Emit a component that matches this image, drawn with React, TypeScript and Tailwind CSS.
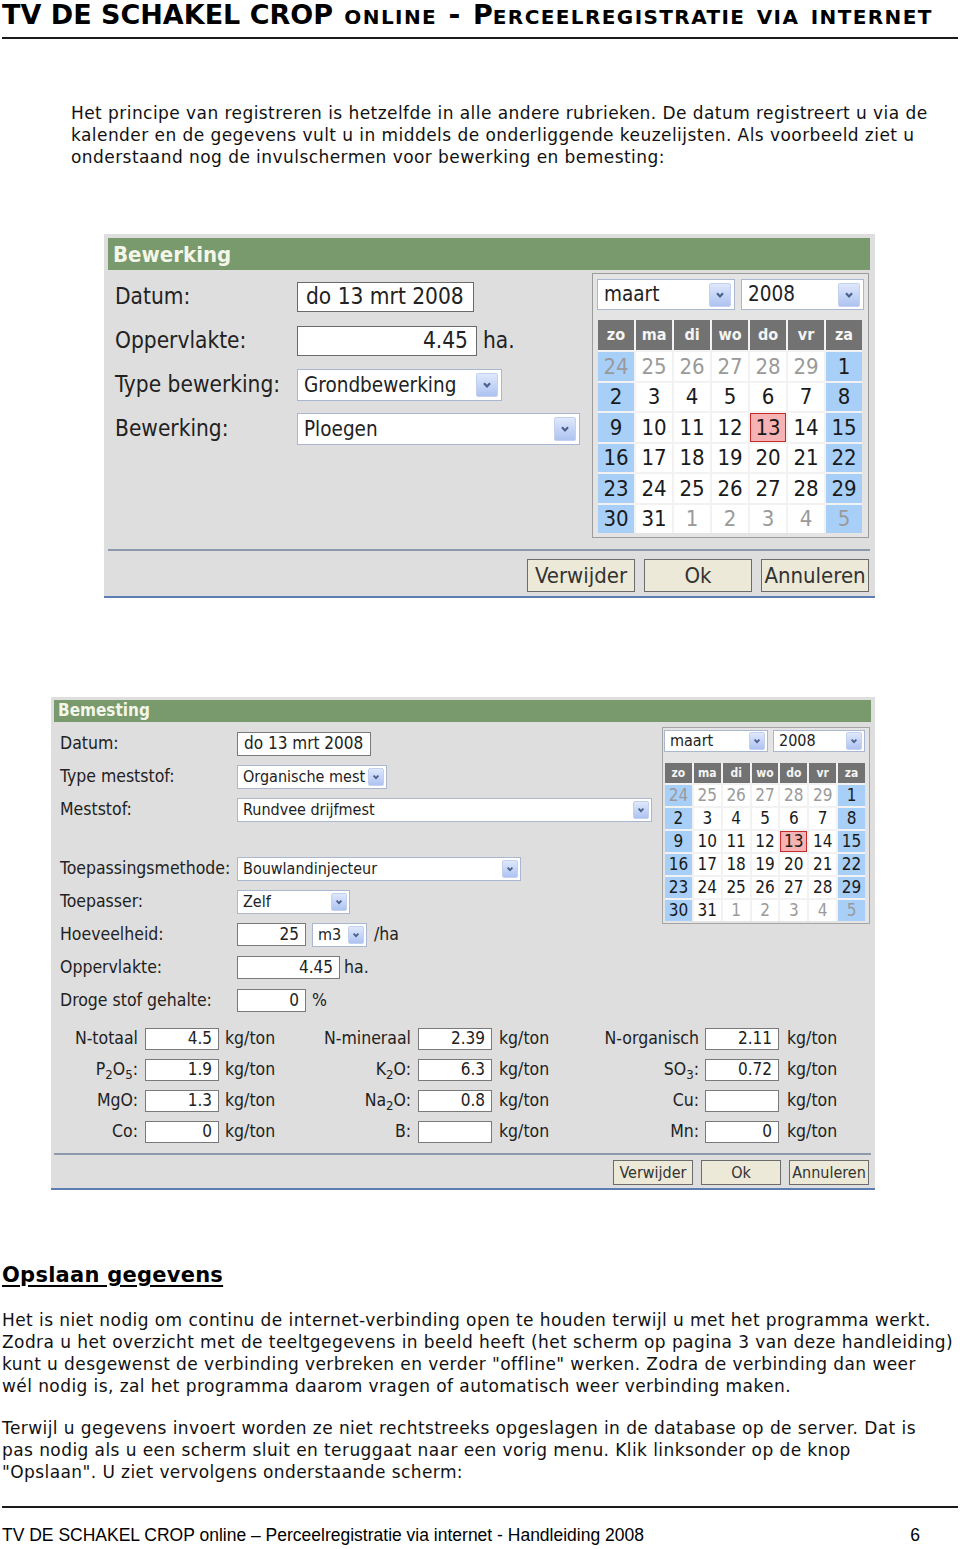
const body = "font-['DejaVu_Sans',Verdana,sans-serif]"
const ui = "font-['DejaVu_Sans_Condensed','DejaVu_Sans',Tahoma,sans-serif] [font-stretch:condensed]"

const weeks = [
	[24, 25, 26, 27, 28, 29, 1],
	[2, 3, 4, 5, 6, 7, 8],
	[9, 10, 11, 12, 13, 14, 15],
	[16, 17, 18, 19, 20, 21, 22],
	[23, 24, 25, 26, 27, 28, 29],
	[30, 31, 1, 2, 3, 4, 5],
]
const dayNames = ["zo", "ma", "di", "wo", "do", "vr", "za"]

function isOther(r: number, c: number) {
	return (r === 0 && c < 6) || (r === 5 && c > 1)
}

const Chevron = ({ big }: { big?: boolean }) => (
	<span
		className={
			big
				? "flex h-[24px] w-[22px] shrink-0 items-center justify-center rounded-[2px] border border-[#c3d1f0] bg-gradient-to-b from-[#dfe8fc] to-[#aec3f1]"
				: "flex h-[18px] w-[16px] shrink-0 items-center justify-center rounded-[2px] border border-[#c3d1f0] bg-gradient-to-b from-[#dfe8fc] to-[#aec3f1]"
		}
	>
		<svg viewBox="0 0 10 10" className={big ? "h-[10px] w-[10px]" : "h-[8px] w-[8px]"}>
			<path d="M2 3.2 L5 6.4 L8 3.2" fill="none" stroke="#4a5f8a" strokeWidth="2.2" />
		</svg>
	</span>
)

const Select = ({ text, w, big }: { text: string; w: string; big?: boolean }) => (
	<div
		className={
			(big
				? "flex h-[31px] items-center justify-between border border-[#a9b8d0] bg-white pl-[6px] pr-[3px] text-[20.5px] "
				: "flex h-[24px] items-center justify-between border border-[#a9b8d0] bg-white pl-[5px] pr-[2px] text-[16px] ") + w
		}
	>
		<span className="whitespace-nowrap text-[#222]">{text}</span>
		<Chevron big={big} />
	</div>
)

const Input = ({ text, w, big, right }: { text: string; w: string; big?: boolean; right?: boolean }) => (
	<div
		className={
			(big
				? "flex h-[30px] items-center border border-[#6a6a6a] bg-white px-[8px] text-[22.5px] "
				: "flex h-[23px] items-center border border-[#7a7a7a] bg-white px-[6px] text-[17px] ") +
			(right ? "justify-end px-[2px] " : "") +
			w
		}
	>
		<span className="whitespace-nowrap text-[#222]">{text}</span>
	</div>
)

const Calendar = ({ big }: { big?: boolean }) => (
	<div
		className={
			big
				? "mt-[3px] h-[265px] w-[277px] border border-[#9c9c9c] bg-[#e4e4e4] pl-[4px] pt-[5px]"
				: "mt-[5px] h-[197px] w-[208px] border border-[#a4a4a4] bg-[#e4e4e4] pl-[1px] pt-[2px]"
		}
	>
		<div className={big ? "flex gap-[6px]" : "flex gap-[5px]"}>
			<Select big={big} text="maart" w={big ? "w-[138px]" : "w-[104px] !h-[22px]"} />
			<Select big={big} text="2008" w={big ? "w-[123px]" : "w-[92px] !h-[22px]"} />
		</div>
		<div
			className={
				big
					? "ml-[1px] mt-[10px] grid w-[264px] grid-cols-7 gap-[2px] bg-[#f2f2f2]"
					: "ml-[1px] mt-[11px] grid w-[200px] grid-cols-7 gap-[2px] bg-[#f2f2f2]"
			}
		>
			{dayNames.map((d) => (
				<div
					key={d}
					className={
						big
							? "flex h-[30px] items-center justify-center bg-[#727272] text-[16px] font-bold text-[#f4f4f4]"
							: "flex h-[20px] items-center justify-center bg-[#727272] text-[12px] font-bold text-[#f4f4f4]"
					}
				>
					{d}
				</div>
			))}
			{weeks.map((row, r) =>
				row.map((d, c) => {
					const weekend = c === 0 || c === 6
					const sel = r === 2 && c === 4
					return (
						<div
							key={r + "-" + c}
							className={[
								"flex items-center justify-center",
								big ? "h-[28.5px] text-[22px]" : "h-[21px] text-[17px]",
								sel
									? "border border-[#c42a2a] bg-[#f7b3b3]"
									: weekend
										? "bg-[#a8cff7]"
										: "bg-white",
								isOther(r, c) ? "text-[#9a9a9a]" : "text-[#1a1a1a]",
							].join(" ")}
						>
							{d}
						</div>
					)
				})
			)}
		</div>
	</div>
)

const Buttons = ({ big }: { big?: boolean }) => {
	const cls = big
		? "flex h-[33px] w-[108px] items-center justify-center border border-[#6c6c6c] bg-[#ece9d8] text-[22px] text-[#333]"
		: "flex h-[25px] w-[80px] items-center justify-center border border-[#6c6c6c] bg-[#ece9d8] text-[16px] text-[#333]"
	return (
		<div className={big ? "mt-[8px] flex justify-end gap-[9px] pr-[1px]" : "mt-[5px] flex justify-end gap-[8px] pr-[2px]"}>
			<div className={cls}>Verwijder</div>
			<div className={cls}>Ok</div>
			<div className={cls}>Annuleren</div>
		</div>
	)
}

const Bewerking = () => (
	<div className={"ml-[104px] mt-[66px] h-[364px] w-[771px] border-b-2 border-[#5d7db3] bg-[#dedede] pl-[4px] pr-[5px] pt-[4px] " + ui}>
		<div className="flex h-[32px] items-center bg-[#799a6c] pl-[5px] text-[22px] font-bold text-[#f3f6e8]">Bewerking</div>
		<div className="flex h-[279px]">
			<div className="w-[484px] pt-[5px] text-[22.5px] text-[#222]">
				<div className="flex h-[44px] items-center">
					<span className="w-[189px] pl-[7px]">Datum:</span>
					<Input big text="do 13 mrt 2008" w="w-[177px]" />
				</div>
				<div className="flex h-[44px] items-center">
					<span className="w-[189px] pl-[7px]">Oppervlakte:</span>
					<Input big right text="4.45" w="w-[180px]" />
					<span className="ml-[6px]">ha.</span>
				</div>
				<div className="flex h-[44px] items-center">
					<span className="w-[189px] whitespace-nowrap pl-[7px]">Type bewerking:</span>
					<Select big text="Grondbewerking" w="w-[205px] !h-[32px]" />
				</div>
				<div className="flex h-[44px] items-center">
					<span className="w-[189px] pl-[7px]">Bewerking:</span>
					<Select big text="Ploegen" w="w-[283px] !h-[32px]" />
				</div>
			</div>
			<Calendar big />
		</div>
		<div className="border-t-2 border-[#8e9aab]" />
		<Buttons big />
	</div>
)

const Row = ({ label, children }: { label: string; children: React.ReactNode }) => (
	<div className="flex h-[33px] items-center">
		<span className="w-[183px] whitespace-nowrap pl-[6px]">{label}</span>
		{children}
	</div>
)

const Nut = ({ label, value, lw, iw, uw }: { label: React.ReactNode; value: string; lw: string; iw: string; uw: string }) => (
	<>
		<span className={"whitespace-nowrap text-right " + lw}>{label}</span>
		<div className={iw}>
			<Input right text={value} w="w-[74px] !h-[22px]" />
		</div>
		<span className={uw}>kg/ton</span>
	</>
)

const nutrients: [React.ReactNode, string, React.ReactNode, string, React.ReactNode, string][] = [
	["N-totaal", "4.5", "N-mineraal", "2.39", "N-organisch", "2.11"],
	[<>P<sub>2</sub>O<sub>5</sub>:</>, "1.9", <>K<sub>2</sub>O:</>, "6.3", <>SO<sub>3</sub>:</>, "0.72"],
	["MgO:", "1.3", <>Na<sub>2</sub>O:</>, "0.8", "Cu:", ""],
	["Co:", "0", "B:", "", "Mn:", "0"],
]

const Bemesting = () => (
	<div className={"ml-[51px] mt-[99px] h-[493px] w-[824px] border-b-2 border-[#5d7db3] bg-[#dedede] pl-[3px] pr-[4px] pt-[3px] text-[17.5px] text-[#222] " + ui}>
		<div className="flex h-[22px] items-center bg-[#799a6c] pl-[4px] text-[17px] font-bold text-[#f3f6e8]">Bemesting</div>
		<div className="flex h-[295px]">
			<div className="w-[608px] pt-[5px]">
				<Row label="Datum:">
					<Input text="do 13 mrt 2008" w="w-[134px] !h-[24px]" />
				</Row>
				<Row label="Type meststof:">
					<Select text="Organische mest" w="w-[150px]" />
				</Row>
				<Row label="Meststof:">
					<Select text="Rundvee drijfmest" w="w-[415px]" />
				</Row>
				<div className="h-[26px]" />
				<Row label="Toepassingsmethode:">
					<Select text="Bouwlandinjecteur" w="w-[284px]" />
				</Row>
				<Row label="Toepasser:">
					<Select text="Zelf" w="w-[113px]" />
				</Row>
				<Row label="Hoeveelheid:">
					<Input right text="25" w="w-[69px]" />
					<div className="ml-[6px]">
						<Select text="m3" w="w-[55px]" />
					</div>
					<span className="ml-[7px]">/ha</span>
				</Row>
				<Row label="Oppervlakte:">
					<Input right text="4.45" w="w-[103px]" />
					<span className="ml-[4px]">ha.</span>
				</Row>
				<Row label="Droge stof gehalte:">
					<Input right text="0" w="w-[69px]" />
					<span className="ml-[6px]">%</span>
				</Row>
			</div>
			<Calendar />
		</div>
		<div className="mt-[6px]">
			{nutrients.map((n, i) => (
				<div key={i} className="flex h-[31px] items-center">
					<Nut label={n[0]} value={n[1]} lw="w-[84px]" iw="ml-[7px]" uw="ml-[6px] w-[75px]" />
					<Nut label={n[2]} value={n[3]} lw="w-[111px]" iw="ml-[7px]" uw="ml-[7px] w-[91px]" />
					<Nut label={n[4]} value={n[5]} lw="w-[109px]" iw="ml-[6px]" uw="ml-[8px]" />
				</div>
			))}
		</div>
		<div className="mt-[6px] border-t-2 border-[#8e9aab]" />
		<Buttons />
	</div>
)

export default function App() {
	return (
		<div className={"w-[960px] bg-white pb-[2px] text-black " + body}>
			<div className="mx-[2px] flex h-[39px] items-start border-b-2 border-[#1a1a1a] text-[27px] font-bold leading-[30px] [font-variant:small-caps]">
				<span className="whitespace-nowrap">
					TV DE SCHAKEL CROP<span className="text-[28.5px] tracking-[1.4px]"> online - </span>P
					<span className="text-[28.5px] tracking-[1.4px]">erceelregistratie via internet</span>
				</span>
			</div>

			<p className="ml-[71px] mt-[63px] text-[17px] leading-[22px] tracking-[0.44px] text-[#111]">
				<span className="block whitespace-nowrap">Het principe van registreren is hetzelfde in alle andere rubrieken. De datum registreert u via de</span>
				<span className="block whitespace-nowrap">kalender en de gegevens vult u in middels de onderliggende keuzelijsten. Als voorbeeld ziet u</span>
				<span className="block whitespace-nowrap">onderstaand nog de invulschermen voor bewerking en bemesting:</span>
			</p>

			<Bewerking />
			<Bemesting />

			<h2 className="ml-[2px] mt-[71px] text-[21px] font-bold leading-[28px] tracking-[0.25px] underline underline-offset-[3px]">Opslaan gegevens</h2>

			<p className="ml-[2px] mt-[20px] text-[17px] leading-[22px] tracking-[0.42px] text-[#111]">
				<span className="block whitespace-nowrap">Het is niet nodig om continu de internet-verbinding open te houden terwijl u met het programma werkt.</span>
				<span className="block whitespace-nowrap">Zodra u het overzicht met de teeltgegevens in beeld heeft (het scherm op pagina 3 van deze handleiding)</span>
				<span className="block whitespace-nowrap">kunt u desgewenst de verbinding verbreken en verder "offline" werken. Zodra de verbinding dan weer</span>
				<span className="block whitespace-nowrap">wél nodig is, zal het programma daarom vragen of automatisch weer verbinding maken.</span>
			</p>
			<p className="ml-[2px] mt-[20px] text-[17px] leading-[22px] tracking-[0.42px] text-[#111]">
				<span className="block whitespace-nowrap">Terwijl u gegevens invoert worden ze niet rechtstreeks opgeslagen in de database op de server. Dat is</span>
				<span className="block whitespace-nowrap">pas nodig als u een scherm sluit en teruggaat naar een vorig menu. Klik linksonder op de knop</span>
				<span className="block whitespace-nowrap">"Opslaan". U ziet vervolgens onderstaande scherm:</span>
			</p>

			<div className="mx-[2px] mt-[23px] border-t-2 border-[#1a1a1a]" />
			<div className="mt-[16px] flex items-center justify-between pl-[2px] pr-[40px] font-['Liberation_Sans',Arial,sans-serif] text-[17.5px] leading-[22px]">
				<span className="whitespace-nowrap">TV DE SCHAKEL CROP online – Perceelregistratie via internet - Handleiding 2008</span>
				<span>6</span>
			</div>
		</div>
	)
}
